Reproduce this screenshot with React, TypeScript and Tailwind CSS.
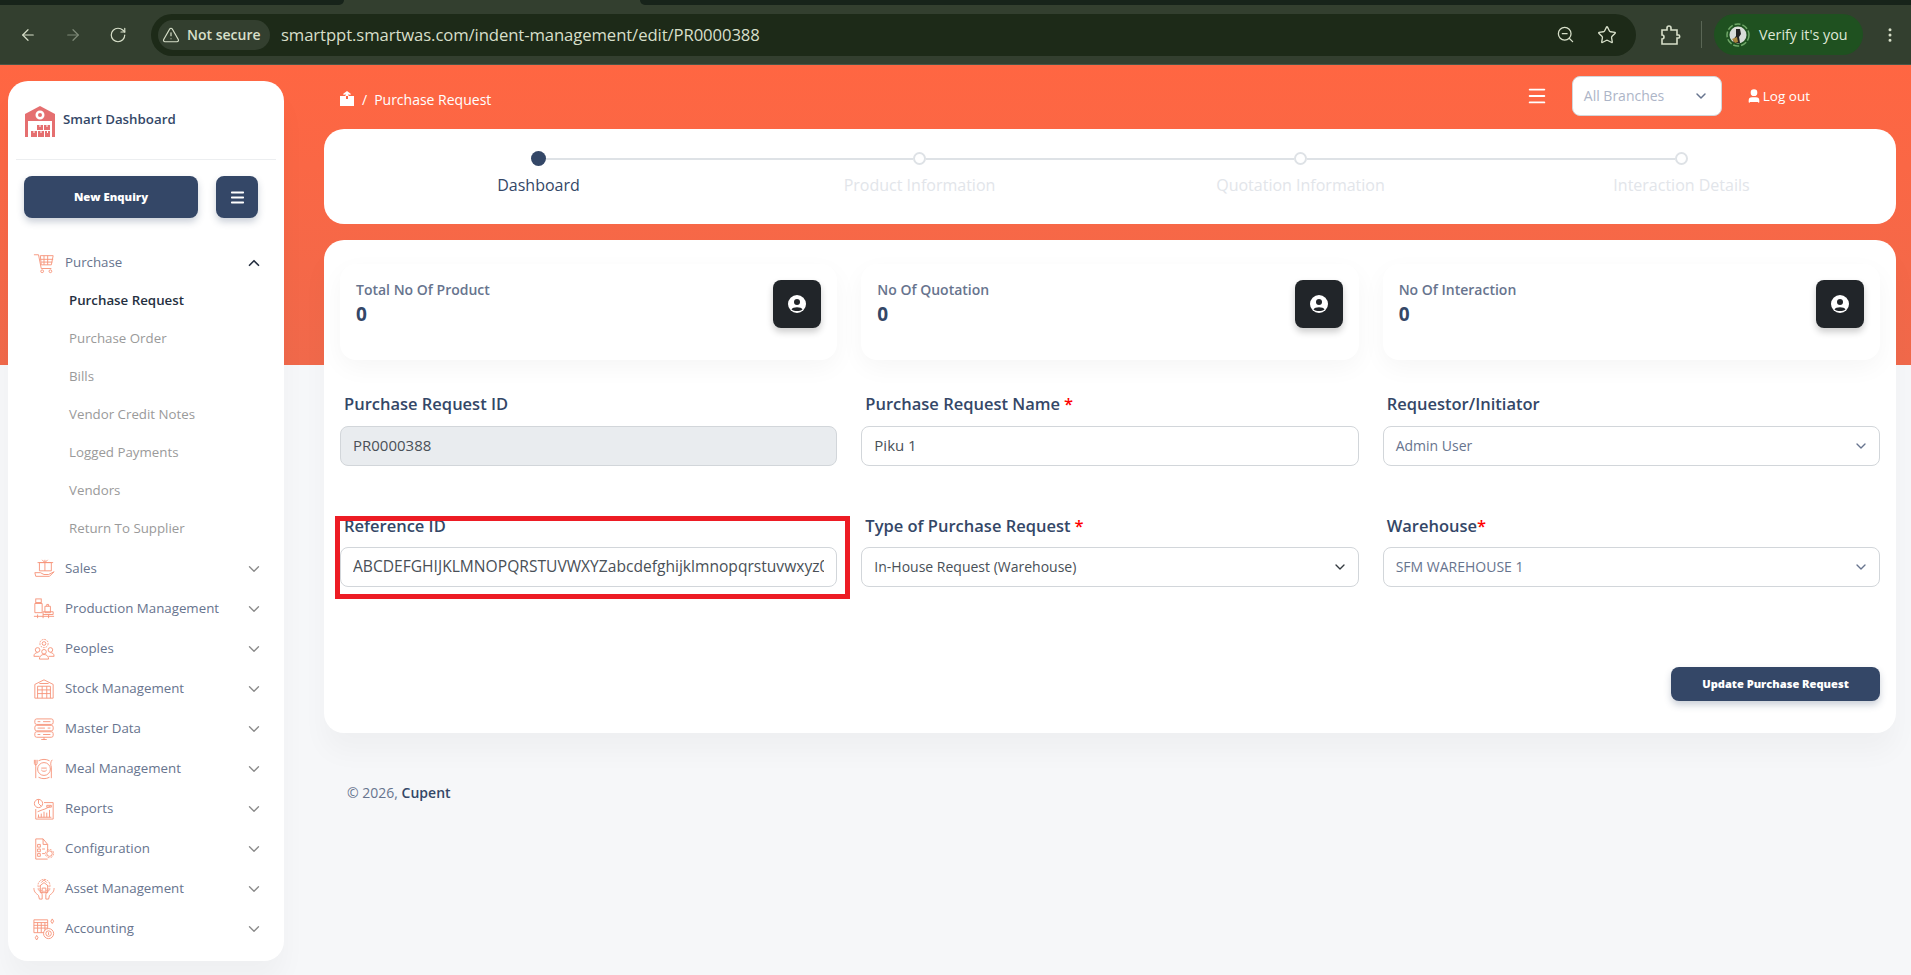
import { ReactNode } from "react";
import {
  ArrowLeft,
  ArrowRight,
  ChevronDown,
  ChevronUp,
  EllipsisVertical,
  Menu,
  RotateCw,
  Star,
  TriangleAlert,
  User,
  ZoomOut,
} from "lucide-react";

const Line = ({ children }: { children: ReactNode }) => (
  <svg
    viewBox="0 0 24 24"
    fill="none"
    stroke="#f6947a"
    strokeWidth="1"
    className="w-[22px] h-[22px] shrink-0"
  >
    {children}
  </svg>
);

const CartIcon = () => (
  <Line>
    <path d="M1 3h5l3 15h11" />
    <path d="M8 4h14l-2 10H9zM8 8h14M9 11h12M12 4v10M16 4v10" />
    <circle cx="10" cy="21" r="1.5" />
    <circle cx="19" cy="21" r="1.5" />
  </Line>
);

const SalesIcon = () => (
  <Line>
    <path d="M7 5h13v9H7zM13 2v12M5 5h17M10 2l3 3 3-3" />
    <path d="M2 16h6l4 2h5l6-3-5 5H3z" />
  </Line>
);

const ProductionIcon = () => (
  <Line>
    <rect x="3" y="1" width="6" height="4" />
    <path d="M2 6h8v10H2zM13 9h6v7h-6zM15 9V7h2v2M11 15h11v3H11zM1 20h22M5 18v4M11 18v4M17 18v4" />
  </Line>
);

const PeoplesIcon = () => (
  <Line>
    <circle cx="12" cy="6" r="4.5" strokeDasharray="2 1" />
    <circle cx="12" cy="6" r="2" />
    <circle cx="5" cy="13" r="2.5" />
    <circle cx="19" cy="13" r="2.5" />
    <circle cx="12" cy="15" r="2.5" />
    <path d="M1 20c0-3 2-4 4-4M23 20c0-3-2-4-4-4M7 23c0-3 2-5 5-5s5 2 5 5zM1 20h6M17 20h6" />
  </Line>
);

const StockIcon = () => (
  <Line>
    <path d="M2 22V7l10-5 10 5v15z" />
    <path d="M5 22V9h14v13M5 13h14M5 17h14M10 9v13M15 9v13M7 6h10" />
  </Line>
);

const MasterIcon = () => (
  <Line>
    <rect x="2" y="1" width="20" height="6" rx="2" />
    <rect x="2" y="8" width="20" height="6" rx="2" />
    <rect x="2" y="15" width="20" height="6" rx="2" />
    <path d="M5 4h3M11 4h8M5 11h8M16 11h3M5 18h3M11 18h8M12 21v3M9 23.500h6" />
  </Line>
);

const MealIcon = () => (
  <Line>
    <circle cx="12" cy="12" r="7" />
    <path d="M9 11h6M9 13c1 2 5 2 6 0M3 2v7M1.500 2v4c0 2 3 2 3 0V2M3 9v13M21 2c-2 2-2 5-1 8v12" />
    <path d="M6 3c4-2 8-2 12 0M6 21c4 2 8 2 12 0" />
  </Line>
);

const ReportsIcon = () => (
  <Line>
    <circle cx="6" cy="6" r="4.500" />
    <path d="M6 1.500V6l3 3M12 5h10v18H3V12" />
    <path d="M15 8h5v2h-5zM5 21h15M6 21v-3M9 21v-4M12 21v-6M15 21v-5M18 21v-8M5 15l5-2 3-1 6-3" />
  </Line>
);

const ConfigIcon = () => (
  <Line>
    <path d="M16 14V7l-5-6H3v22h13M11 1v6h5" />
    <path d="M5 7h3v3H5zM5 12h3v3H5zM5 17h3v3H5zM10 12h3M10 17h3" />
    <circle cx="18" cy="17" r="3" />
    <circle cx="18" cy="17" r="4.500" strokeDasharray="2 1.500" />
  </Line>
);

const AssetIcon = () => (
  <Line>
    <path d="M7 9l5-4 5 4M8 8v8h8V8M10 16v-5h4v5M9 5l3-3 3 3" />
    <circle cx="12" cy="8" r="6.500" strokeDasharray="2 1" />
    <path d="M1 11c0 5 3 6 5 8l1 4h3v-5c0-2-3-4-5-6M23 11c0 5-3 6-5 8l-1 4h-3v-5c0-2 3-4 5-6" />
  </Line>
);

const AccountingIcon = () => (
  <Line>
    <path d="M1 2h15v14H1zM1 5h15M1 8h15M1 11h15M5 5v11M9 5v11M13 5v11" />
    <circle cx="17" cy="17" r="5.500" fill="#fff" />
    <circle cx="17" cy="17" r="3" />
    <path d="M17 15.500v3M21 1l1.500 2.500L21 6l-1.500-2.500zM4 19l1.500 2.500L4 24l-1.500-2.500z" />
  </Line>
);

const WarehouseLogo = () => (
  <svg viewBox="0 0 30 31" className="w-[30px] h-[31px] shrink-0 mt-[2px]">
    <path
      fill="#e56f70"
      fillRule="evenodd"
      d="M15 0l15 8v23h-3V15H3v16H0V8zm0 4.500a4.500 4.500 0 1 0 0 9 4.500 4.500 0 0 0 0-9zm0 2.500a2 2 0 1 1 0 4 2 2 0 0 1 0-4z"
    />
    <path fill="#e56f70" d="M6 25h6v6H6zM13 25h6v6h-6zM20 25h5v6h-5zM12 19h6v5h-6zM19 19h6v5h-6z" />
    <path stroke="#fff" strokeWidth="1" d="M9 25v2M16 25v2M22.500 25v2M15 19v2M22 19v2" />
  </svg>
);

const menu = [
  { label: "Sales", icon: <SalesIcon /> },
  { label: "Production Management", icon: <ProductionIcon /> },
  { label: "Peoples", icon: <PeoplesIcon /> },
  { label: "Stock Management", icon: <StockIcon /> },
  { label: "Master Data", icon: <MasterIcon /> },
  { label: "Meal Management", icon: <MealIcon /> },
  { label: "Reports", icon: <ReportsIcon /> },
  { label: "Configuration", icon: <ConfigIcon /> },
  { label: "Asset Management", icon: <AssetIcon /> },
  { label: "Accounting", icon: <AccountingIcon /> },
];

const subMenu = [
  "Purchase Order",
  "Bills",
  "Vendor Credit Notes",
  "Logged Payments",
  "Vendors",
  "Return To Supplier",
];

const BrowserBar = () => (
  <div className="h-[65px] shrink-0 bg-[#333f2f] flex flex-col border-b border-[#4a5548]">
    <div className="h-[5px] flex">
      <div className="w-[344px] bg-[#17231a] rounded-br-lg" />
      <div className="w-[296px]" />
      <div className="flex-1 bg-[#17231a] rounded-bl-lg" />
    </div>
    <div className="flex-1 flex items-center text-[#d7dfc9]">
      <div className="w-[151px] pl-[19px] flex items-center gap-[27px]">
        <ArrowLeft size={18} strokeWidth={1.6} />
        <ArrowRight size={18} strokeWidth={1.6} className="text-[#7f8a78]" />
        <RotateCw size={18} strokeWidth={1.6} />
      </div>
      <div className="w-[1485px] h-[42px] rounded-full bg-[#1d2a18] flex items-center pl-[7px] pr-[19px]">
        <div className="h-[30px] pl-[4px] w-[112px] rounded-full bg-[#333f2f] flex items-center gap-[7px] text-[14px] font-semibold whitespace-nowrap">
          <TriangleAlert size={18} strokeWidth={1.6} className="shrink-0" />
          <span>Not secure</span>
        </div>
        <span className="ml-[11px] pt-[1px] text-[16.700px] tracking-[-0.1px]">
          smartppt.smartwas.com/indent-management/edit/PR0000388
        </span>
        <ZoomOut size={19} strokeWidth={1.6} className="ml-auto" />
        <Star size={20} strokeWidth={1.6} className="ml-[22px]" />
      </div>
      <svg viewBox="0 0 24 24" fill="none" stroke="currentColor" strokeWidth="1.600" className="ml-[22px] w-[24px] h-[24px]">
        <path d="M4 7h5V5a2 2 0 0 1 4 0v2h6v5h2a2 2 0 0 1 0 3h-2v6H4v-5a2 2 0 0 0 0-4z" />
      </svg>
      <div className="ml-[19px] w-px h-[27px] bg-[#5a6655]" />
      <div className="ml-[12px] w-[149px] h-[41px] rounded-full bg-[#1f5120] flex items-center pl-[12px] gap-[9px] text-[14.300px] text-[#dfe8d6]">
        <svg viewBox="0 0 24 24" className="w-[24px] h-[24px] shrink-0">
          <circle cx="12" cy="12" r="11" fill="none" stroke="#6fa868" strokeWidth="1.500" strokeDasharray="6 2" />
          <circle cx="12" cy="12" r="8.500" fill="#d9dcd8" />
          <path d="M10 6h4l1 5-2 3 1 6H8l-1-3 3-4z" fill="#222" />
          <path d="M6 16l5-2 1 5-3 1z" fill="#a8863c" />
        </svg>
        <span>Verify it's you</span>
      </div>
      <EllipsisVertical size={18} className="ml-[18px]" />
    </div>
  </div>
);

const Sidebar = () => (
  <aside className="w-[276px] h-[880px] ml-2 mt-4 shrink-0 bg-white rounded-[20px] shadow-[0_20px_27px_rgba(0,0,0,0.03)] flex flex-col">
    <div className="h-[79px] mx-2 pl-[9px] flex items-center gap-2 border-b border-[#eceef0]">
      <WarehouseLogo />
      <span className="text-[13.300px] font-semibold text-[#344767]">Smart Dashboard</span>
    </div>
    <div className="mt-[16px] pl-4 flex gap-[18px]">
      <button className="w-[174px] h-[42px] rounded-[8px] bg-[#344767] text-white text-[11.300px] font-extrabold shadow-[0_4px_7px_rgba(52,71,103,0.25)]">
        New Enquiry
      </button>
      <button className="w-[42px] h-[42px] rounded-[8px] bg-[#344767] text-white flex items-center justify-center shadow-[0_4px_7px_rgba(52,71,103,0.25)]">
        <Menu size={17} strokeWidth={2.6} />
      </button>
    </div>
    <nav className="mt-[26px] pl-[25px] pr-[21px] text-[13.300px]">
      <div className="h-[38px] flex items-center">
        <CartIcon />
        <span className="ml-[10px] text-[#67748e]">Purchase</span>
        <ChevronUp size={18} strokeWidth={2.2} className="ml-auto text-[#252f40]" />
      </div>
      <div className="pl-[36px]">
        <div className="h-[38px] flex items-center font-semibold text-[#252f40]">Purchase Request</div>
        {subMenu.map((item) => (
          <div key={item} className="h-[38px] flex items-center text-[#9a9a9a]">
            {item}
          </div>
        ))}
      </div>
      <div className="pt-[1px]">
        {menu.map((item) => (
          <div key={item.label} className="h-[40px] flex items-center">
            {item.icon}
            <span className="ml-[10px] text-[#67748e]">{item.label}</span>
            <ChevronDown size={18} strokeWidth={1.8} className="ml-auto text-[#8a8a8a]" />
          </div>
        ))}
      </div>
    </nav>
  </aside>
);

const Steps = () => {
  const steps = ["Dashboard", "Product Information", "Quotation Information", "Interaction Details"];
  return (
    <div className="h-[95px] bg-white rounded-[20px] grid grid-cols-4 px-6 pt-[22px]">
      {steps.map((step, i) => (
        <div key={step} className="flex flex-col items-center">
          <div className="w-full h-[15px] flex items-center">
            <div className={`flex-1 h-[2px] ${i === 0 ? "" : "bg-[#dee2e6]"}`} />
            {i === 0 ? (
              <div className="w-[15px] h-[15px] rounded-full bg-[#344767]" />
            ) : (
              <div className="w-[13px] h-[13px] rounded-full border-2 border-[#dee2e6] bg-white" />
            )}
            <div className={`flex-1 h-[2px] ${i === 3 ? "" : "bg-[#dee2e6]"}`} />
          </div>
          <div className={`mt-[7px] text-[16px] ${i === 0 ? "text-[#344767]" : "text-[#e2e5ea]"}`}>{step}</div>
        </div>
      ))}
    </div>
  );
};

const StatCard = ({ label }: { label: string }) => (
  <div className="h-[96px] rounded-[16px] bg-white shadow-[0_8px_24px_rgba(0,0,0,0.04)] pl-4 pr-4 pt-4 flex justify-between">
    <div>
      <div className="text-[14px] leading-[20px] font-semibold text-[#67748e]">{label}</div>
      <div className="mt-[1px] text-[19px] leading-[26px] font-bold text-[#344767]">0</div>
    </div>
    <div className="w-[48px] h-[48px] rounded-[8px] bg-[#212529] flex items-center justify-center shadow-[0_4px_7px_rgba(0,0,0,0.2)]">
      <svg viewBox="0 0 20 20" className="w-[20px] h-[20px]">
        <circle cx="10" cy="10" r="9" fill="#fff" />
        <circle cx="10" cy="8" r="3" fill="#212529" />
        <path d="M4.500 15.500c1-3 10-3 11 0-3 2-8 2-11 0z" fill="#212529" />
      </svg>
    </div>
  </div>
);

const Label = ({ text, star, tight }: { text: string; star?: boolean; tight?: boolean }) => (
  <label className="block pl-1 text-[16.500px] leading-[22px] font-semibold text-[#344767]">
    {text}
    {star && <span className={`text-[#ff0000] ${tight ? "" : "ml-1"}`}>*</span>}
  </label>
);

const SelectBox = ({ value, dark }: { value: string; dark?: boolean }) => (
  <div
    className={`h-[40px] rounded-[8px] border border-[#d2d6da] bg-white flex items-center justify-between pl-[12px] pr-[10px] text-[14px] ${
      dark ? "text-[#495057]" : "text-[#67748e]"
    }`}
  >
    <span className="pb-[2px]">{value}</span>
    <ChevronDown size={16} strokeWidth={2} className={dark ? "text-[#343a40]" : "text-[#67748e]"} />
  </div>
);

const TextInput = ({ value, disabled, wide }: { value: string; disabled?: boolean; wide?: boolean }) => (
  <input
    readOnly
    value={value}
    className={`w-full h-[40px] rounded-[8px] border border-[#d2d6da] pl-3 pr-3 pb-[2px] text-[#495057] outline-none ${
      wide ? "text-[15.600px]" : "text-[15px]"
    } ${disabled ? "bg-[#e9ecef]" : "bg-white"}`}
  />
);

export default function App() {
  return (
    <div className="w-[1911px] h-[975px] overflow-hidden flex flex-col bg-[#f6f7f9] [font-family:'Open_Sans',sans-serif]">
      <BrowserBar />
      <div className="flex-1 flex bg-[linear-gradient(#ff6642_0,#f0694b_300px,#f6f7f9_300px)]">
        <Sidebar />
        <main className="ml-[40px] w-[1572px]">
          <div className="h-[64px] flex items-center pl-[15px] pt-[4px] pr-[86px] text-white">
            <svg viewBox="0 0 16 16" className="w-[16px] h-[16px]" fill="#fff">
              <path d="M1 5h5.500V3L5 4 4 3l4-3 4 3-1 1-1.500-1v2H15v10H1zM7 5v3h2V5z" />
            </svg>
            <span className="ml-[7px] text-[14px]">/</span>
            <span className="ml-[7px] text-[14px]">Purchase Request</span>
            <div className="ml-auto flex items-center pb-[6px]">
              <Menu size={22} strokeWidth={2} />
              <div className="ml-[24px] w-[150px] h-[40px] rounded-[8px] bg-white border border-[#d2d6da] flex items-center justify-between pl-[11px] pr-[12px] text-[14px] text-[#adb5c7]">
                <span className="pb-[2px]">All Branches</span>
                <ChevronDown size={16} strokeWidth={2.2} className="text-[#67748e]" />
              </div>
              <User size={16} fill="#fff" className="ml-[24px]" />
              <span className="ml-[1px] text-[13.500px] font-medium">Log out</span>
            </div>
          </div>
          <Steps />
          <div className="relative mt-4 h-[493px] bg-white rounded-[20px] shadow-[0_20px_27px_rgba(0,0,0,0.03)] px-4 pt-6">
            <div className="grid grid-cols-3 gap-6">
              <StatCard label="Total No Of Product" />
              <StatCard label="No Of Quotation" />
              <StatCard label="No Of Interaction" />
            </div>
            <div className="mt-[33px] grid grid-cols-3 gap-x-6">
              <div>
                <Label text="Purchase Request ID" />
                <div className="mt-[11px]">
                  <TextInput value="PR0000388" disabled />
                </div>
              </div>
              <div>
                <Label text="Purchase Request Name" star />
                <div className="mt-[11px]">
                  <TextInput value="Piku 1" />
                </div>
              </div>
              <div>
                <Label text="Requestor/Initiator" />
                <div className="mt-[11px]">
                  <SelectBox value="Admin User" />
                </div>
              </div>
            </div>
            <div className="mt-[49px] grid grid-cols-3 gap-x-6">
              <div>
                <Label text="Reference ID" />
                <div className="mt-[10px]">
                  <TextInput value="ABCDEFGHIJKLMNOPQRSTUVWXYZabcdefghijklmnopqrstuvwxyz0123456789" wide />
                </div>
              </div>
              <div>
                <Label text="Type of Purchase Request" star />
                <div className="mt-[10px]">
                  <SelectBox value="In-House Request (Warehouse)" dark />
                </div>
              </div>
              <div>
                <Label text="Warehouse" star tight />
                <div className="mt-[10px]">
                  <SelectBox value="SFM WAREHOUSE 1" />
                </div>
              </div>
            </div>
            <div className="mt-[80px] flex justify-end">
              <button className="w-[209px] h-[34px] rounded-[8px] bg-[#344767] text-white text-[11.100px] font-extrabold shadow-[0_4px_7px_rgba(52,71,103,0.25)]">
                Update Purchase Request
              </button>
            </div>
            {/* annotation box drawn on top of the screenshot */}
            <div className="absolute left-[11px] top-[276px] w-[515px] h-[83px] border-[5px] border-[#ed1c24] pointer-events-none" />
          </div>
          <div className="mt-[49px] pl-[23px] text-[14px] text-[#67748e]">
            © 2026, <span className="font-semibold text-[#344767]">Cupent</span>
          </div>
        </main>
      </div>
    </div>
  );
}
